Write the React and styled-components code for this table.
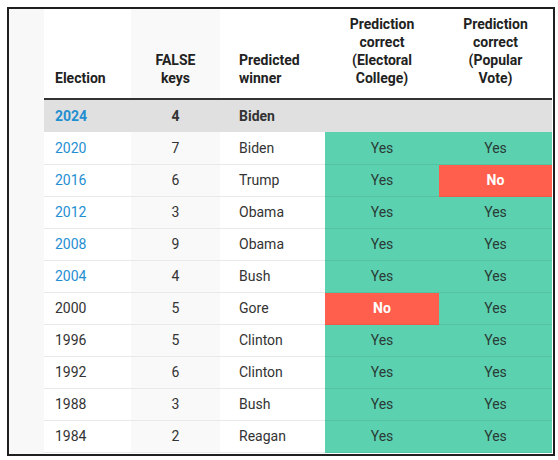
import React from "react";
import styled, { createGlobalStyle } from "styled-components";

const Global = createGlobalStyle`
  html, body { margin: 0; padding: 0; background: #fff; }
  body { font-family: Roboto, "Liberation Sans", Arial, sans-serif; }
`;

const Frame = styled.div`
  margin: 7px 0 0 7px;
  width: 544px;
  height: 445px;
  border: 2px solid #1f1f1f;
  display: flex;
  overflow: hidden;
  background: #fff;
`;

const Side = styled.div`
  width: 35px;
  flex: none;
  background: #f8f8f8;
`;

const Table = styled.table`
  width: 508px;
  border-collapse: collapse;
  table-layout: fixed;
  font-size: 14px;
  color: #333;
  align-self: flex-start;
`;

const Th = styled.th`
  font-weight: 700;
  color: #222;
  line-height: 18px;
  padding: 6px 4px 11px ${(p) => p.$pad || "4px"};
  text-align: ${(p) => p.$align || "center"};
  vertical-align: bottom;
  background: ${(p) => (p.$shade ? "#f9f9f9" : "#fff")};
  border-bottom: 2px solid #333;
`;

const Tr = styled.tr`
  height: ${(p) => (p.$current ? "33px" : "32px")};
  font-weight: ${(p) => (p.$current ? 700 : 400)};
`;

const Td = styled.td`
  padding: 0 4px 0 ${(p) => p.$pad || "4px"};
  text-align: ${(p) => p.$align || "center"};
  border-bottom: 1px solid ${(p) => (p.$current ? "transparent" : "#e9e9e9")};
  background: ${(p) =>
    p.$current ? "#e0e0e0" : p.$shade ? "#f9f9f9" : "#fff"};
  color: ${(p) => (p.$link ? "#1f8fd1" : "#333")};
  line-height: 18px;
`;

const Result = styled.td`
  text-align: center;
  padding: 0;
  line-height: 18px;
  background: ${(p) => (p.$yes ? "#5cd1b0" : "#ff5f4c")};
  color: ${(p) => (p.$yes ? "#2a3b36" : "#fff")};
  font-weight: ${(p) => (p.$yes ? 400 : 700)};
  border-bottom: 1px solid ${(p) => (p.$yes ? "#54c3a4" : "#ef5947")};
`;

const Blank = styled.td`
  background: #e0e0e0;
`;

const rows = [
  ["2020", 7, "Biden", true, true, true],
  ["2016", 6, "Trump", true, false, true],
  ["2012", 3, "Obama", true, true, true],
  ["2008", 9, "Obama", true, true, true],
  ["2004", 4, "Bush", true, true, true],
  ["2000", 5, "Gore", false, true, false],
  ["1996", 5, "Clinton", true, true, false],
  ["1992", 6, "Clinton", true, true, false],
  ["1988", 3, "Bush", true, true, false],
  ["1984", 2, "Reagan", true, true, false],
];

export default function App() {
  return (
    <>
      <Global />
      <Frame>
        <Side />
        <Table>
          <colgroup>
            <col style={{ width: 87 }} />
            <col style={{ width: 89 }} />
            <col style={{ width: 105 }} />
            <col style={{ width: 114 }} />
            <col style={{ width: 113 }} />
          </colgroup>
          <thead>
            <tr>
              <Th $align="left" $pad="11px">Election</Th>
              <Th $shade>
                FALSE
                <br />
                keys
              </Th>
              <Th $align="left" $pad="19px">
                Predicted
                <br />
                winner
              </Th>
              <Th>
                Prediction
                <br />
                correct
                <br />
                (Electoral
                <br />
                College)
              </Th>
              <Th>
                Prediction
                <br />
                correct
                <br />
                (Popular
                <br />
                Vote)
              </Th>
            </tr>
          </thead>
          <tbody>
            <Tr $current>
              <Td $align="left" $pad="11px" $link $current>
                2024
              </Td>
              <Td $current>4</Td>
              <Td $align="left" $pad="19px" $current>
                Biden
              </Td>
              <Blank />
              <Blank />
            </Tr>
            {rows.map(([year, keys, who, ec, pv, link]) => (
              <Tr key={year}>
                <Td $align="left" $pad="11px" $link={link}>
                  {year}
                </Td>
                <Td $shade>{keys}</Td>
                <Td $align="left" $pad="19px">
                  {who}
                </Td>
                <Result $yes={ec}>{ec ? "Yes" : "No"}</Result>
                <Result $yes={pv}>{pv ? "Yes" : "No"}</Result>
              </Tr>
            ))}
          </tbody>
        </Table>
      </Frame>
    </>
  );
}
